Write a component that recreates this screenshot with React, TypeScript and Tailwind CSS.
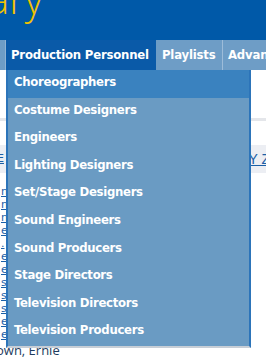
import React from 'react';

const MENU = [
  'Choreographers',
  'Costume Designers',
  'Engineers',
  'Lighting Designers',
  'Set/Stage Designers',
  'Sound Engineers',
  'Sound Producers',
  'Stage Directors',
  'Television Directors',
  'Television Producers',
];

// link fragments peeking out at the left edge under the menu
const LINK_ENDS = ['n', 'n', 'n', 'e', '.', 'e', 'e', 's', 's', 's', 'e', 'e'];

export default function App() {
  return (
    <div className="relative h-[357px] w-[266px] overflow-hidden bg-white font-['DejaVu_Sans',sans-serif]">
      <header className="h-[40px] overflow-hidden bg-[#0059a8]">
        <div className="ml-[-12px] mt-[-21px] whitespace-nowrap font-['Open_Sans',sans-serif] text-[40px] font-light leading-[40px] text-[#f2c200]">
          ary
        </div>
      </header>

      <nav className="flex h-[30px] whitespace-nowrap bg-[#6e9dc6] font-['DejaVu_Sans_Condensed','DejaVu_Sans',sans-serif] text-[13px] font-bold tracking-[-0.2px] text-white [font-stretch:condensed]">
        <div className="w-[6px] shrink-0 border-r border-[#8fb3d4]" />
        <div className="flex w-[150px] shrink-0 items-center bg-[#0a5aa8] pb-px pl-[5px]">
          Production Personnel
        </div>
        <div className="flex w-[67px] shrink-0 items-center border-r border-[#9dbcd9] pb-px pl-[6px]">
          Playlists
        </div>
        <div className="flex items-center pb-px pl-[5px]">Advanced</div>
      </nav>

      <main className="text-[11px]">
        <div className="mt-[48px] h-[3px] bg-[#e4e6ea]" />
        <div className="mt-[24px] flex h-[28px] items-center justify-between bg-[#eceef3] text-[#1b5fa6]">
          <span className="ml-[-3px] underline">E</span>
          <span className="mr-[-4px] font-['Liberation_Sans',sans-serif] text-[14px] underline">Y Z</span>
        </div>
        <div className="mt-[12px] flex flex-col">
          {LINK_ENDS.map((c, i) => (
            <span key={i} className="h-[13px] pl-px leading-[13px] text-[#1b5fa6] underline">
              {c}
            </span>
          ))}
        </div>
        <div className="ml-[-4px] mt-[2px] font-['Open_Sans',sans-serif] text-[13px] leading-[14px] text-[#1d3c5e]">
          own, Ernie
        </div>
      </main>

      <ul className="absolute left-[6px] top-[70px] w-[245px] border-x-2 border-b-2 border-x-[#2c74b9] border-b-[#c7ced6] bg-[#6a9bc3] font-['DejaVu_Sans_Condensed','DejaVu_Sans',sans-serif] text-[13px] font-bold tracking-[-0.3px] text-white [font-stretch:condensed]">
        {MENU.map((item, i) => (
          <li
            key={item}
            className={`flex h-[27.6px] items-center whitespace-nowrap pb-[4px] pl-[6px] ${i === 0 ? 'bg-[#3a82bf]' : ''}`}
          >
            {item}
          </li>
        ))}
      </ul>
    </div>
  );
}
